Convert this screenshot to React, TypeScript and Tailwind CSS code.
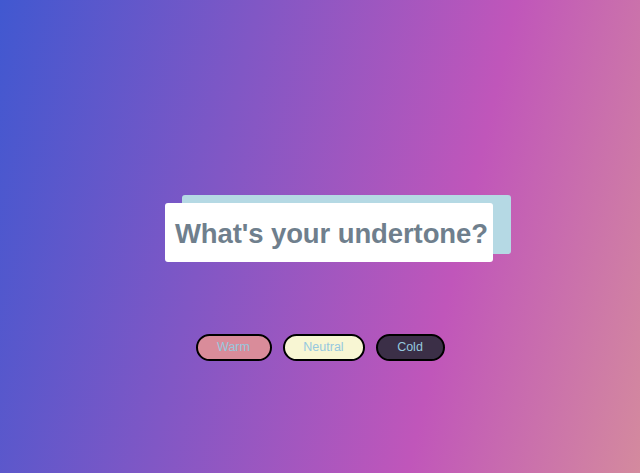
import React from "react";

const tones = [
  { label: "Warm", cls: "w-[76px] bg-[#d98c9a]" },
  { label: "Neutral", cls: "w-[82px] bg-[#f8f6d3]" },
  { label: "Cold", cls: "w-[69px] bg-[#3b2f47]" },
];

export default function App() {
  return (
    <div
      className="w-[640px] h-[473px] flex flex-col items-center pt-[203px] bg-[linear-gradient(103deg,#4158d0_0%,#c056ba_69%,#d48a9e_100%)]"
      style={{ fontFamily: "'Liberation Sans', Arial, sans-serif" }}
    >
      {/* title card with offset backdrop */}
      <div className="relative ml-[18px]">
        <div className="absolute left-[17px] -top-[8px] w-[329px] h-[59px] rounded-[3px] bg-[#b5d9e4]" />
        <div className="relative w-[328px] h-[59px] rounded-[3px] bg-white flex items-center pl-[10px] pt-[2px]">
          <h1 className="text-[27.5px] leading-none font-bold text-[#6f7f8d] whitespace-nowrap tracking-[-0.1px]">
            What's your undertone?
          </h1>
        </div>
      </div>

      <div className="flex gap-[11px] mt-[72px]">
        {tones.map((t) => (
          <button
            key={t.label}
            className={`h-[27px] rounded-full border-2 border-black text-[12.5px] text-[#96c8df] flex items-center justify-center ${t.cls}`}
          >
            {t.label}
          </button>
        ))}
      </div>
    </div>
  );
}
